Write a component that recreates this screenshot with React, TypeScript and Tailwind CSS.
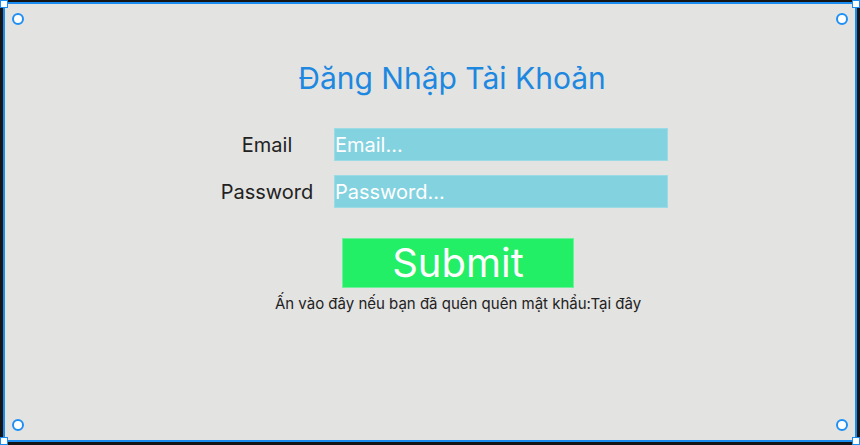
import React from 'react';

const font = { fontFamily: 'Inter, "Noto Sans", sans-serif' };

// selection chrome drawn over the frame
function Handle({ className }: { className: string }) {
  return <div className={`absolute w-[8px] h-[8px] bg-white border border-[#1a8cf0] ${className}`} />;
}

function Dot({ className }: { className: string }) {
  return <div className={`absolute w-[12px] h-[12px] rounded-full bg-white border-2 border-[#1e90f5] ${className}`} />;
}

export default function App() {
  return (
    <div className="relative h-[445px] w-[860px] bg-[#151515] pt-[2px] pl-[3px] pr-[3px] pb-[3px]" style={font}>
      <div className="relative h-full w-full border-2 border-[#1a8cf0] bg-[#e3e3e1]">
        <div className="pt-[56px] pl-[44px] text-center text-[30px] leading-[36px] text-[#1e88e0]">
          Đăng Nhập Tài Khoản
        </div>

        <div className="mt-[32px] flex flex-col gap-[14px] pl-[207px]">
          {[
            { label: 'Email', ph: 'Email...' },
            { label: 'Password', ph: 'Password...' },
          ].map(row => (
            <div key={row.label} className="flex items-center gap-[12px]">
              <span className="w-[110px] text-center text-[20px] text-[#222]">{row.label}</span>
              <input
                className="h-[33px] w-[334px] border border-[#9bdbe6] bg-[#83d2e0] pl-0 text-[20px] text-white placeholder:text-white outline-none"
                placeholder={row.ph}
              />
            </div>
          ))}
        </div>

        <div className="mt-[30px] flex justify-center pl-[56px]">
          <button className="h-[50px] w-[232px] border border-[#6ff09a] bg-[#22ee66] text-[40px] leading-[48px] text-white">
            Submit
          </button>
        </div>

        <p className="mt-[7px] pl-[56px] text-center text-[15px] leading-[18px] text-[#222]">
          Ấn vào đây nếu bạn đã quên quên mật khẩu:Tại đây
        </p>

        <Dot className="left-[7px] top-[9px]" />
        <Dot className="right-[7px] top-[9px]" />
        <Dot className="left-[7px] bottom-[9px]" />
        <Dot className="right-[7px] bottom-[9px]" />
      </div>

      <Handle className="left-0 top-0" />
      <Handle className="right-0 top-0" />
      <Handle className="left-0 bottom-0" />
      <Handle className="right-0 bottom-0" />
    </div>
  );
}
